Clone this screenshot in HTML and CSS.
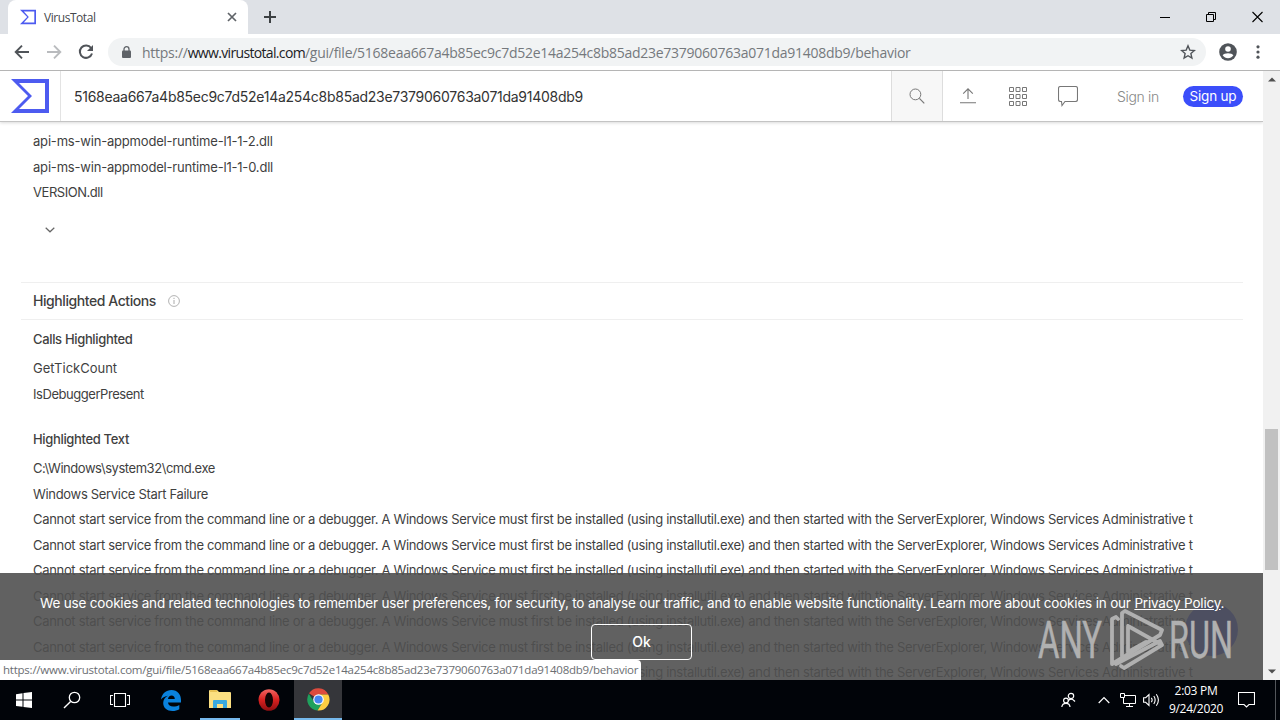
FILE: index.html
```html
<!DOCTYPE html>
<html lang="en">
<head>
    <meta charset="UTF-8">
    <meta name="viewport" content="width=device-width, initial-scale=1.0">
    <title>VirusTotal</title>
    <link rel="stylesheet" href="styles.css">
</head>
<body>
    <div class="browser">
        <div class="tab-strip">
            <div class="tab">
                <svg class="favicon" width="16" height="16" viewBox="0 0 38 34"><path d="M0 0H38V34H0L17 17ZM9 4L21 17L9 30H34V4Z" fill="#4d5bf0" fill-rule="evenodd"/></svg>
                <span class="tab-title">VirusTotal</span>
                <svg class="tab-close" width="10" height="10" viewBox="0 0 10 10"><path d="M1 1L9 9M9 1L1 9" stroke="#5f6368" stroke-width="1.7"/></svg>
            </div>
            <svg class="new-tab" width="12" height="12" viewBox="0 0 12 12"><path d="M6 0V12M0 6H12" stroke="#3c4043" stroke-width="2"/></svg>
            <div class="window-buttons">
                <svg width="11" height="12" viewBox="0 0 11 12"><path d="M0 6.5H10" stroke="#000"/></svg>
                <svg width="11" height="12" viewBox="0 0 11 12"><path d="M.5 3.5H7.5V10.5H.5ZM2.5 3V1.5H9.5V8.5H8" fill="none" stroke="#000"/></svg>
                <svg width="11" height="12" viewBox="0 0 11 12"><path d="M.5 1L10.5 11M10.5 1L.5 11" stroke="#000" stroke-width="1.1"/></svg>
            </div>
        </div>

        <div class="toolbar">
            <svg width="16" height="16" viewBox="0 0 16 16"><path d="M15 8H2.5M8 1.7L1.7 8L8 14.3" fill="none" stroke="#505459" stroke-width="1.9"/></svg>
            <svg width="16" height="16" viewBox="0 0 16 16"><path d="M1 8H13.5M8 1.7L14.3 8L8 14.3" fill="none" stroke="#b9bbbe" stroke-width="1.9"/></svg>
            <svg width="16" height="16" viewBox="0 0 16 16"><path d="M13.1 4A6.2 6.2 0 1 0 14 9.5" fill="none" stroke="#505459" stroke-width="2"/><path d="M15 1V7H9Z" fill="#505459"/></svg>
            <div class="address-bar">
                <svg class="lock" width="10" height="13" viewBox="0 0 10 13"><rect y="4.5" width="9" height="7.5" rx="1" fill="#5f6368"/><path d="M2 5V3.2a2.5 2.5 0 0 1 5 0V5" fill="none" stroke="#5f6368" stroke-width="1.3"/></svg>
                <span class="url"><span class="url-scheme">https://</span><span class="url-host">www.virustotal.com</span><span class="url-path">/gui/file/5168eaa667a4b85ec9c7d52e14a254c8b85ad23e7379060763a071da91408db9/behavior</span></span>
                <svg class="star" width="16" height="16" viewBox="0 0 16 16"><path d="M8 1.8L9.8 6.1L14.4 6.5L10.9 9.6L11.9 14.1L8 11.7L4.1 14.1L5.1 9.6L1.6 6.5L6.2 6.1Z" fill="none" stroke="#505459" stroke-width="1.4"/></svg>
            </div>
            <svg class="profile" width="18" height="18" viewBox="0 0 18 18"><circle cx="9" cy="9" r="8.8" fill="#505459"/><circle cx="9" cy="6" r="2.8" fill="#fff"/><path d="M3.6 12.3C5 9.6 13 9.6 14.4 12.3C13 14.3 11.2 15.2 9 15.2S5 14.3 3.6 12.3Z" fill="#fff"/></svg>
            <svg class="kebab" width="4" height="16" viewBox="0 0 4 16"><g fill="#505459"><circle cx="2" cy="2.8" r="1.6"/><circle cx="2" cy="8" r="1.6"/><circle cx="2" cy="13.2" r="1.6"/></g></svg>
        </div>

        <div class="viewport">
            <div class="page">
                <header>
                    <div class="logo"><svg width="38" height="34" viewBox="0 0 38 34"><path d="M0 0H38V34H0L17 17ZM8 4L21 17L8 30H34V4Z" fill="#4d5bf0" fill-rule="evenodd"/></svg></div>
                    <div class="search-text">5168eaa667a4b85ec9c7d52e14a254c8b85ad23e7379060763a071da91408db9</div>
                    <div class="search-button"><svg width="16" height="16" viewBox="0 0 16 16"><circle cx="6.4" cy="6.4" r="5.4" fill="none" stroke="#777"/><path d="M10.4 10.4L15.3 15.3" stroke="#777" stroke-width="1.2"/></svg></div>
                    <div class="actions">
                        <svg width="16" height="16" viewBox="0 0 16 16"><path d="M8 11V1M3.2 5.7L8 .9L12.8 5.7M0 14.8H16" fill="none" stroke="#777" stroke-width="1.1"/></svg>
                        <svg class="apps" width="18" height="20" viewBox="0 0 18 20"><path d="M.5 1.5H4.5V5.5H.5ZM7 1.5H11V5.5H7ZM13.5 1.5H17.5V5.5H13.5ZM.5 8.5H4.5V12.5H.5ZM7 8.5H11V12.5H7ZM13.5 8.5H17.5V12.5H13.5ZM.5 15.5H4.5V19.5H.5ZM7 15.5H11V19.5H7ZM13.5 15.5H17.5V19.5H13.5Z" fill="none" stroke="#777"/></svg>
                        <svg class="comment" width="20" height="21" viewBox="0 0 20 21"><path d="M2.5.5H17.5Q19.5.5 19.5 2.5V13.5Q19.5 15.5 17.5 15.5H7L4 19.5L3.5 15.5H2.5Q.5 15.5.5 13.5V2.5Q.5.5 2.5.5Z" fill="none" stroke="#777" stroke-width="1.1"/></svg>
                        <span class="sign-in">Sign in</span>
                        <span class="sign-up">Sign up</span>
                    </div>
                </header>

                <main>
                    <ul class="modules">
                        <li>api-ms-win-appmodel-runtime-l1-1-2.dll</li>
                        <li>api-ms-win-appmodel-runtime-l1-1-0.dll</li>
                        <li class="tight">VERSION.dll</li>
                    </ul>
                    <div class="expand"><svg width="10" height="6" viewBox="0 0 10 6"><path d="M.7.7L5 4.8L9.3.7" fill="none" stroke="#666" stroke-width="1.2"/></svg></div>
                    <div class="section-title">
                        <h2>Highlighted Actions</h2>
                        <svg width="12" height="12" viewBox="0 0 12 12"><circle cx="6" cy="6" r="5.4" fill="none" stroke="#aaa" stroke-width=".9"/><path d="M6 5V9M6 2.8V4" stroke="#aaa"/></svg>
                    </div>
                    <h3>Calls Highlighted</h3>
                    <ul>
                        <li class="loose">GetTickCount</li>
                        <li class="tight">IsDebuggerPresent</li>
                    </ul>
                    <h3 class="text-title">Highlighted Text</h3>
                    <ul>
                        <li class="tight">C:\Windows\system32\cmd.exe</li>
                        <li>Windows Service Start Failure</li>
                        <li>Cannot start service from the command line or a debugger. A Windows Service must first be installed (using installutil.exe) and then started with the ServerExplorer, Windows Services Administrative t</li>
                        <li>Cannot start service from the command line or a debugger. A Windows Service must first be installed (using installutil.exe) and then started with the ServerExplorer, Windows Services Administrative t</li>
                        <li>Cannot start service from the command line or a debugger. A Windows Service must first be installed (using installutil.exe) and then started with the ServerExplorer, Windows Services Administrative t</li>
                        <li>Cannot start service from the command line or a debugger. A Windows Service must first be installed (using installutil.exe) and then started with the ServerExplorer, Windows Services Administrative t</li>
                        <li>Cannot start service from the command line or a debugger. A Windows Service must first be installed (using installutil.exe) and then started with the ServerExplorer, Windows Services Administrative t</li>
                        <li>Cannot start service from the command line or a debugger. A Windows Service must first be installed (using installutil.exe) and then started with the ServerExplorer, Windows Services Administrative t</li>
                        <li>Cannot start service from the command line or a debugger. A Windows Service must first be installed (using installutil.exe) and then started with the ServerExplorer, Windows Services Administrative t</li>
                    </ul>
                </main>

                <div class="chat-bubble"></div>
                <div class="cookie-bar">
                    <p>We use cookies and related technologies to remember user preferences, for security, to analyse our traffic, and to enable website functionality. Learn more about cookies in our <a href="#">Privacy Policy</a>.</p>
                    <button>Ok</button>
                </div>
                <div class="status-bubble">https://www.virustotal.com/gui/file/5168eaa667a4b85ec9c7d52e14a254c8b85ad23e7379060763a071da91408db9/behavior</div>
                <svg class="watermark" width="198" height="64" viewBox="0 0 198 64">
                    <g fill="#b0b0b0" stroke="#b0b0b0" stroke-width=".5" font-family="Roboto, sans-serif" font-size="51">
                        <text x="0" y="49" textLength="64" lengthAdjust="spacingAndGlyphs">ANY</text>
                        <text x="131" y="49" textLength="64" lengthAdjust="spacingAndGlyphs">RUN</text>
                    </g>
                    <g fill="none" stroke="#b0b0b0" stroke-width="3.8" stroke-linejoin="round" stroke-linecap="round">
                        <path d="M80 10L78 8L74 10V55L122 26L124 21L87 2L84 4V48"/>
                        <path d="M90 17L124 36L86 59L83 57M124 36L122 32L78 55M90 17V43L108 33"/>
                    </g>
                </svg>
            </div>
            <div class="scrollbar">
                <svg class="arrow" width="8" height="5" viewBox="0 0 8 5"><path d="M0 4.5L4 .5L8 4.5Z" fill="#505050"/></svg>
                <div class="thumb"></div>
                <svg class="arrow" width="8" height="5" viewBox="0 0 8 5"><path d="M0 .5L4 4.5L8 .5Z" fill="#505050"/></svg>
            </div>
        </div>
    </div>

    <div class="taskbar">
        <div class="task"><svg width="16" height="16" viewBox="0 0 16 16"><path d="M0 2.2L6.5 1.2V7.5H0ZM7.5 1L16 0V7.5H7.5ZM0 8.5H6.5V14.8L0 13.9ZM7.5 8.5H16V16L7.5 15Z" fill="#fff"/></svg></div>
        <div class="task"><svg width="18" height="18" viewBox="0 0 18 18"><circle cx="11.5" cy="6.5" r="5.2" fill="none" stroke="#fff" stroke-width="1.3"/><path d="M7.6 10.4L1 17" stroke="#fff" stroke-width="1.4"/></svg></div>
        <div class="task"><svg width="20" height="14" viewBox="0 0 20 14"><path d="M4.5.5H15.5V13.5H4.5ZM3 2.5H.5V11.5H3M17 2.5H19.5V11.5H17" fill="none" stroke="#fff" stroke-width="1.1"/></svg></div>
        <div class="task edge"><svg width="20" height="21" viewBox="0 0 20 21"><path d="M0 9.5C1 3.5 5 0 10.5 0C16.5 0 20 4.5 20 10V12.5H7C7.2 15.2 9.3 16.6 12.2 16.6C14.6 16.6 16.6 16 18.3 15V19.2C16.5 20.4 14 21 11.4 21C6 21 2.2 17.8 2.2 13C2.2 9.7 4 7.2 7 5.8C4.2 6.2 1.8 7.2 0 9.5ZM7 9H13.8C13.7 6.8 12.6 5.6 10.6 5.6C8.7 5.6 7.3 6.8 7 9Z" fill="#0a82dd"/></svg></div>
        <div class="task open"><svg width="22" height="19" viewBox="0 0 22 19"><path d="M0 1Q0 0 1 0H8L10 2H21Q22 2 22 3V18H0Z" fill="#fbdf81"/><path d="M1 1H8" stroke="#d7a629"/><path d="M4 11Q4 10 5 10H17Q18 10 18 11V18H14V14H8V18H4Z" fill="#39a9df"/></svg></div>
        <div class="task opera"><svg width="22" height="22" viewBox="0 0 22 22"><defs><linearGradient id="red" x2="0" y2="1"><stop stop-color="#f26662"/><stop offset=".5" stop-color="#d8201f"/><stop offset="1" stop-color="#8e0f12"/></linearGradient></defs><ellipse cx="11" cy="11" rx="10.5" ry="10.8" fill="url(#red)"/><ellipse cx="11" cy="11" rx="4" ry="7.5" fill="#120405"/></svg></div>
        <div class="task open active"><svg width="23" height="23" viewBox="0 0 24 24"><path d="M12 12L2.04 5.6A11.5 11.5 0 0 1 22.2 6.8H12Z" fill="#dd4b3e"/><path d="M12 12L7.5 14.6L1.9 6A11.5 11.5 0 0 0 11 23.5L16.5 14.6Z" fill="#1fa15d"/><path d="M12 6.8H22.2A11.5 11.5 0 0 1 11 23.5L16.5 14.6Z" fill="#fdce42"/><circle cx="12" cy="12" r="5.5" fill="#fff"/><circle cx="12" cy="12" r="4.3" fill="#4786f2"/></svg></div>
        <div class="tray">
            <svg class="people" width="15" height="16" viewBox="0 0 15 16"><g fill="none" stroke="#fff" stroke-width="1.2"><circle cx="10" cy="4" r="2.7"/><path d="M7 9Q10 5 14 9.5"/><circle cx="5" cy="8.5" r="2.4"/><path d="M.8 15Q1.2 11.3 5 11.3T9 15"/></g></svg>
            <svg class="chevron" width="12" height="8" viewBox="0 0 12 8"><path d="M.7 7L6 1.5L11.3 7" fill="none" stroke="#fff" stroke-width="1.2"/></svg>
            <svg class="network" width="16" height="14" viewBox="0 0 16 14"><path d="M5 2.5H15.5V10.5H3.5V5M.5.5H4.5V4.5H.5ZM9.5 10.5V13.5M6 13.5H13" fill="none" stroke="#fff"/></svg>
            <svg class="volume" width="17" height="14" viewBox="0 0 17 14"><path d="M.6 4.7H2.7L6 1.5V12.5L2.7 9.3H.6ZM8.3 4.8Q10 7 8.3 9.2M10.8 3Q13.5 7 10.8 11M13.3 1.2Q17.5 7 13.3 12.8" fill="none" stroke="#fff" stroke-width="1.1"/></svg>
            <div class="clock"><span class="time">2:03 PM</span><span class="date">9/24/2020</span></div>
            <svg class="notify" width="17" height="16" viewBox="0 0 17 16"><path d="M.5.5H16.5V12.5H11L8.5 15L6 12.5H.5Z" fill="none" stroke="#fff" stroke-width="1.1"/></svg>
            <div class="show-desktop"></div>
        </div>
    </div>
</body>
</html>
```
FILE: styles.css
```css
* {
    box-sizing: border-box;
    margin: 0;
    padding: 0;
}

body {
    width: 1280px;
    height: 720px;
    overflow: hidden;
    display: flex;
    flex-direction: column;
    font-family: Inter, "Liberation Sans", sans-serif;
    color: #3f3f3f;
    background-color: #fff;
}

svg {
    display: block;
    flex: none;
}

.browser {
    height: 680px;
    display: flex;
    flex-direction: column;
}

/* tabs */
.tab-strip {
    height: 34px;
    display: flex;
    align-items: center;
    padding-left: 8px;
    background-color: #dee1e6;
}

.tab {
    width: 240px;
    height: 34px;
    display: flex;
    align-items: center;
    padding: 0 11px 0 12px;
    background-color: #fff;
    border-radius: 8px 8px 0 0;
}

.tab-title {
    flex: 1;
    margin-left: 8px;
    font-family: "Open Sans", sans-serif;
    font-size: 12px;
    letter-spacing: -0.45px;
    color: #45484c;
}

.new-tab {
    margin-left: 16px;
}

.window-buttons {
    margin-left: auto;
    margin-right: 17px;
    display: flex;
    gap: 35px;
}

/* toolbar */
.toolbar {
    height: 37px;
    display: flex;
    align-items: center;
    padding: 0 20px 0 14px;
    gap: 16px;
    background-color: #fff;
    border-bottom: 1px solid #b5b5b5;
}

.address-bar {
    flex: 1;
    height: 28px;
    margin-left: -2px;
    margin-right: -3px;
    display: flex;
    align-items: center;
    padding: 0 10px 0 14px;
    border-radius: 14px;
    background-color: #f1f3f4;
}

.url {
    flex: 1;
    margin-left: 10px;
    font-family: "Open Sans", sans-serif;
    font-size: 14px;
    letter-spacing: -0.265px;
    color: #75797d;
    white-space: nowrap;
}

.url-host {
    letter-spacing: -0.66px;
    color: #202124;
}

.profile {
    margin-right: 3px;
}

/* page */
.viewport {
    flex: 1;
    min-height: 0;
    display: flex;
}

.page {
    position: relative;
    width: 1263px;
    overflow: hidden;
}

header {
    position: relative;
    height: 51px;
    display: flex;
    border-bottom: 1px solid #c4c4c4;
    box-shadow: 0 1px 3px rgba(0, 0, 0, 0.15);
}

.logo {
    width: 61px;
    display: flex;
    align-items: center;
    padding-left: 11px;
    border-right: 1px solid #e3e3e3;
}

.search-text {
    flex: 1;
    display: flex;
    align-items: center;
    padding-left: 13px;
    font-size: 14px;
    letter-spacing: -0.27px;
    color: #333;
}

.search-button {
    width: 52px;
    display: flex;
    align-items: center;
    justify-content: center;
    background-color: #f7f7f7;
    border-left: 1px solid #ddd;
    border-right: 1px solid #ddd;
}

.actions {
    width: 320px;
    display: flex;
    align-items: center;
    padding-left: 17px;
}

.apps {
    margin-left: 33px;
}

.comment {
    margin-left: 31px;
}

.sign-in {
    width: 42px;
    margin-left: 39px;
    font-size: 14px;
    font-weight: 300;
    letter-spacing: -0.35px;
    color: #888;
    white-space: nowrap;
}

.sign-up {
    width: 60px;
    height: 21px;
    margin-left: 24px;
    border-radius: 11px;
    background-color: #3b4efa;
    color: #fff;
    font-size: 13.5px;
    letter-spacing: -0.2px;
    line-height: 21px;
    text-align: center;
    white-space: nowrap;
}

main {
    padding: 7.25px 20px 0 21px;
}

ul {
    list-style: none;
    padding-left: 12px;
}

li {
    height: 25.5px;
    line-height: 25.5px;
    font-size: 13px;
    letter-spacing: -0.317px;
    white-space: nowrap;
}

.modules {
    letter-spacing: -0.19px;
}

.modules li {
    letter-spacing: -0.19px;
}

li.tight {
    letter-spacing: -0.45px;
}

li.loose {
    letter-spacing: 0;
}

.expand {
    height: 75.75px;
    padding: 21px 0 0 24px;
}

.section-title {
    height: 38px;
    display: flex;
    align-items: center;
    gap: 12px;
    padding-left: 12px;
    border-top: 1px solid #efefef;
    border-bottom: 1px solid #efefef;
}

h2 {
    font-size: 14px;
    font-weight: 500;
    letter-spacing: -0.43px;
}

h3 {
    height: 33px;
    margin-top: 3.75px;
    padding-left: 12px;
    font-size: 13px;
    font-weight: 500;
    letter-spacing: -0.34px;
    line-height: 32px;
}

.text-title {
    margin-top: 16px;
}

.chat-bubble {
    position: absolute;
    left: 1185px;
    top: 532px;
    width: 53px;
    height: 53px;
    border-radius: 50%;
    background-color: #3b4efa;
}

.cookie-bar {
    position: absolute;
    left: 0;
    right: 0;
    bottom: 0;
    height: 107px;
    display: flex;
    flex-direction: column;
    align-items: center;
    padding-top: 20px;
    background-color: rgba(80, 80, 80, 0.9);
    color: #fff;
}

.cookie-bar p {
    width: 1183px;
    height: 20px;
    font-size: 13.5px;
    letter-spacing: -0.182px;
    line-height: 20px;
    white-space: nowrap;
}

.cookie-bar a {
    color: #fff;
}

.cookie-bar button {
    width: 101px;
    height: 36px;
    margin-top: 11px;
    margin-left: 20px;
    padding-bottom: 2px;
    background: none;
    border: 1px solid #fff;
    border-radius: 4px;
    color: #fff;
    font-family: inherit;
    font-size: 14px;
    font-weight: 500;
}

.status-bubble {
    position: absolute;
    left: 0;
    bottom: 0;
    width: 641px;
    height: 20px;
    padding-left: 3px;
    background-color: #fff;
    border-top-right-radius: 4px;
    font-family: "Open Sans", sans-serif;
    font-size: 11.5px;
    letter-spacing: -0.235px;
    line-height: 19px;
    color: #6b6e72;
    white-space: nowrap;
}

.watermark {
    position: absolute;
    left: 1038px;
    top: 538px;
}

.scrollbar {
    width: 17px;
    display: flex;
    flex-direction: column;
    align-items: center;
    padding: 6px 0;
    background-color: #f1f1f1;
}

.thumb {
    width: 13px;
    height: 141px;
    margin-top: 347px;
    margin-bottom: auto;
    background-color: #c1c1c1;
}

/* taskbar */
.taskbar {
    height: 40px;
    display: flex;
    background-color: #010409;
    color: #fff;
}

.task {
    width: 48px;
    display: flex;
    align-items: center;
    justify-content: center;
}

.edge {
    width: 54px;
    margin-right: 2px;
}

.open {
    width: 40px;
    margin-right: 4px;
    border-bottom: 2px solid #76b9ed;
}

.opera {
    width: 50px;
}

.active {
    width: 48px;
    background-color: #35363a;
}

.tray {
    flex: 1;
    display: flex;
    align-items: center;
    justify-content: flex-end;
}

.chevron {
    margin-left: 22px;
}

.network {
    margin-left: 10px;
}

.volume {
    margin-left: 7px;
}

.clock {
    width: 54px;
    margin-left: 9px;
    display: flex;
    flex-direction: column;
    align-items: center;
    font-family: "Open Sans", sans-serif;
    font-size: 12px;
    letter-spacing: -0.3px;
    line-height: 18px;
    white-space: nowrap;
}

.notify {
    margin-left: 15px;
}

.show-desktop {
    width: 5px;
    height: 40px;
    margin-left: 20px;
    border-left: 1px solid #53565a;
}
```
